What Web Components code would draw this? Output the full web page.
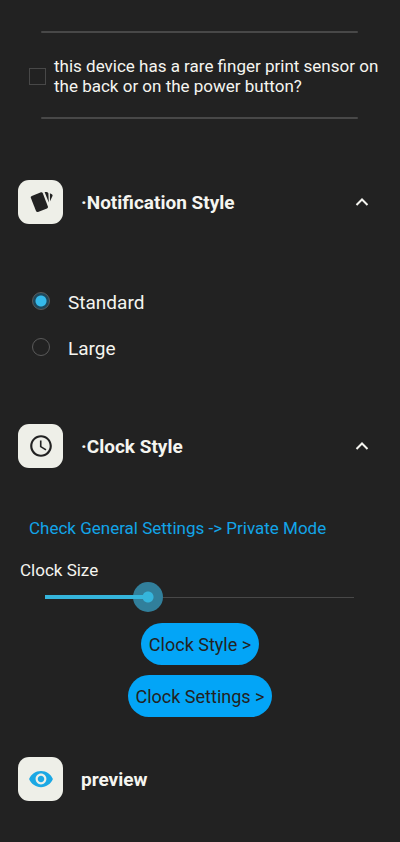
<!DOCTYPE html>
<html lang="en">
<head>
<meta charset="utf-8">
<meta name="viewport" content="width=device-width, initial-scale=1">
<title>Settings</title>
<style>
html { background: #222222; }
body { margin: 0; font-family: Roboto, "Noto Sans", sans-serif; color: #f5f5f0; background: #222222; }
</style>
</head>
<body>
<settings-page></settings-page>
<script>
const define = (name, html, setup) => {
  const template = document.createElement('template');
  template.innerHTML = html;
  customElements.define(name, class extends HTMLElement {
    constructor() {
      super();
      this.attachShadow({ mode: 'open' }).append(template.content.cloneNode(true));
    }
    connectedCallback() { if (setup) setup(this, this.shadowRoot); }
  });
};

define('divider-line', `
<style>:host { display: block; height: 2px; margin: 0 42px 0 41px; background: #484848; border-radius: 1px; }</style>`);

define('check-option', `
<style>
:host { display: block; padding: 0 16px 0 29px; }
label { display: flex; align-items: center; gap: 8px; font-size: 17px; line-height: 20px; }
input { appearance: none; flex: none; box-sizing: border-box; width: 17px; height: 17px; margin: 0; border: 1px solid #484848; }
input:checked { background: #33b5e5; }
</style>
<label><input type="checkbox"><span><slot></slot></span></label>`);

define('section-header', `
<style>
:host { display: flex; align-items: center; padding: 0 24px 0 18px; }
.tile { display: flex; align-items: center; justify-content: center; width: 45px; height: 44px; border-radius: 11px; background: #eeefe8; color: #222222; }
h2 { flex: 1; margin: 0 0 0 18px; padding-top: 2px; font-size: 19px; line-height: 24px; font-weight: 700; }
button { display: flex; padding: 0; border: 0; background: none; color: inherit; }
button[hidden] { display: none; }
</style>
<div class="tile"><slot name="icon"></slot></div>
<h2><slot></slot></h2>
<button type="button" aria-label="Collapse" aria-expanded="true"><svg width="28" height="28" viewBox="0 0 28 28" fill="none" stroke="currentColor" stroke-width="2"><path d="M8.500 17 L14 11.500 L19.500 17"/></svg></button>`,
(host, root) => { root.querySelector('button').hidden = !host.hasAttribute('collapsible'); });

define('radio-list', `
<style>
:host { display: block; padding: 0 32px; }
label { display: flex; align-items: center; gap: 18px; height: 46px; font-size: 19px; line-height: 24px; }
span { padding-top: 3px; }
input { appearance: none; box-sizing: border-box; width: 18px; height: 18px; margin: 0; border: 1px solid #5a5a5a; border-radius: 50%; }
input:checked { background: radial-gradient(circle, #35b9ea 5px, #1d475b 6px); }
</style>
<label><input type="radio" name="size" checked><span>Standard</span></label>
<label><input type="radio" name="size"><span>Large</span></label>`);

define('range-field', `
<style>
:host { display: block; }
label { display: block; padding: 0 20px; font-size: 17px; line-height: 20px; }
input {
  appearance: none; display: block; box-sizing: border-box;
  width: calc(100% - 61px); height: 30px; margin: 2px 31px 0 30px;
  background:
    linear-gradient(#35b5dc, #35b5dc) 15px 50% / calc((100% - 30px) / 3) 4px no-repeat,
    linear-gradient(#484848, #484848) 50% 50% / calc(100% - 30px) 1px no-repeat;
}
input::-webkit-slider-thumb {
  appearance: none; width: 30px; height: 30px; border-radius: 50%;
  background:
    radial-gradient(circle, #35b5dc 5px, transparent 6px),
    linear-gradient(#35b5dc, #35b5dc) 0 50% / 50% 4px no-repeat,
    #317f9b;
}
</style>
<label for="range"><slot></slot></label>
<input id="range" type="range" min="0" max="300" value="100">`);

define('pill-button', `
<style>
:host { display: block; }
button { display: block; height: 42px; padding: 2px 8px 0; border: 0; border-radius: 21px; background: #03a5f7; color: #222222; font: 18px/24px Roboto, "Noto Sans", sans-serif; }
</style>
<button type="button"><slot></slot></button>`);

define('settings-page', `
<style>
:host { display: block; padding: 31px 0 40px; }
check-option { margin: 23px 0 21px; }
.notification { margin-top: 61px; }
radio-list { margin-top: 54px; }
.clock { margin-top: 54px; }
a { display: block; width: fit-content; margin: 50px 0 0 29px; font-size: 17px; line-height: 20px; color: #12a5e8; text-decoration: none; }
range-field { margin-top: 22px; }
.actions { display: flex; flex-direction: column; align-items: center; gap: 10px; margin-top: 11px; }
.preview { margin-top: 40px; }
svg { display: block; }
</style>
<divider-line></divider-line>
<check-option>this device has a rare finger print sensor on the back or on the power button?</check-option>
<divider-line></divider-line>
<section-header class="notification" collapsible>
  <svg slot="icon" width="26" height="26" viewBox="0 0 26 26" fill="currentColor"><path d="M3.800 7 L13 3.300 Q14.300 3 14.800 4.200 L19.900 17.500 Q20.300 18.900 19 19.500 L10 23 Q8.600 23.400 8 22 L2.800 8.800 Q2.400 7.600 3.800 7Z"/><path d="M16.600 3 H18.600 Q20.300 3 20.400 4.500 L20.800 13.400Z"/><path d="M21.900 4.300 L23.800 5.200 Q25 5.800 24.500 7 L22 12.300Z"/></svg>
  ·Notification Style
</section-header>
<radio-list></radio-list>
<section-header class="clock" collapsible>
  <svg slot="icon" width="26" height="26" viewBox="0 0 24 24" fill="currentColor"><path d="M12 2C6.500 2 2 6.500 2 12s4.500 10 10 10 10-4.500 10-10S17.500 2 12 2zm0 18c-4.400 0-8-3.600-8-8s3.600-8 8-8 8 3.600 8 8-3.600 8-8 8zm.5-13H11v6l5.200 3.200.8-1.300-4.500-2.700V7z"/></svg>
  ·Clock Style
</section-header>
<a href="#general">Check General Settings -&gt; Private Mode</a>
<range-field>Clock Size</range-field>
<div class="actions">
  <pill-button>Clock Style &gt;</pill-button>
  <pill-button>Clock Settings &gt;</pill-button>
</div>
<section-header class="preview">
  <svg slot="icon" width="26" height="26" viewBox="0 0 24 24" fill="#1ba8e4"><path d="M12 4.500C7 4.500 2.730 7.610 1 12c1.730 4.390 6 7.500 11 7.500s9.270-3.110 11-7.500c-1.730-4.390-6-7.500-11-7.500zM12 17c-2.760 0-5-2.240-5-5s2.240-5 5-5 5 2.240 5 5-2.240 5-5 5zm0-8c-1.660 0-3 1.340-3 3s1.340 3 3 3 3-1.340 3-3-1.340-3-3-3z"/></svg>
  preview
</section-header>`);
</script>
</body>
</html>
